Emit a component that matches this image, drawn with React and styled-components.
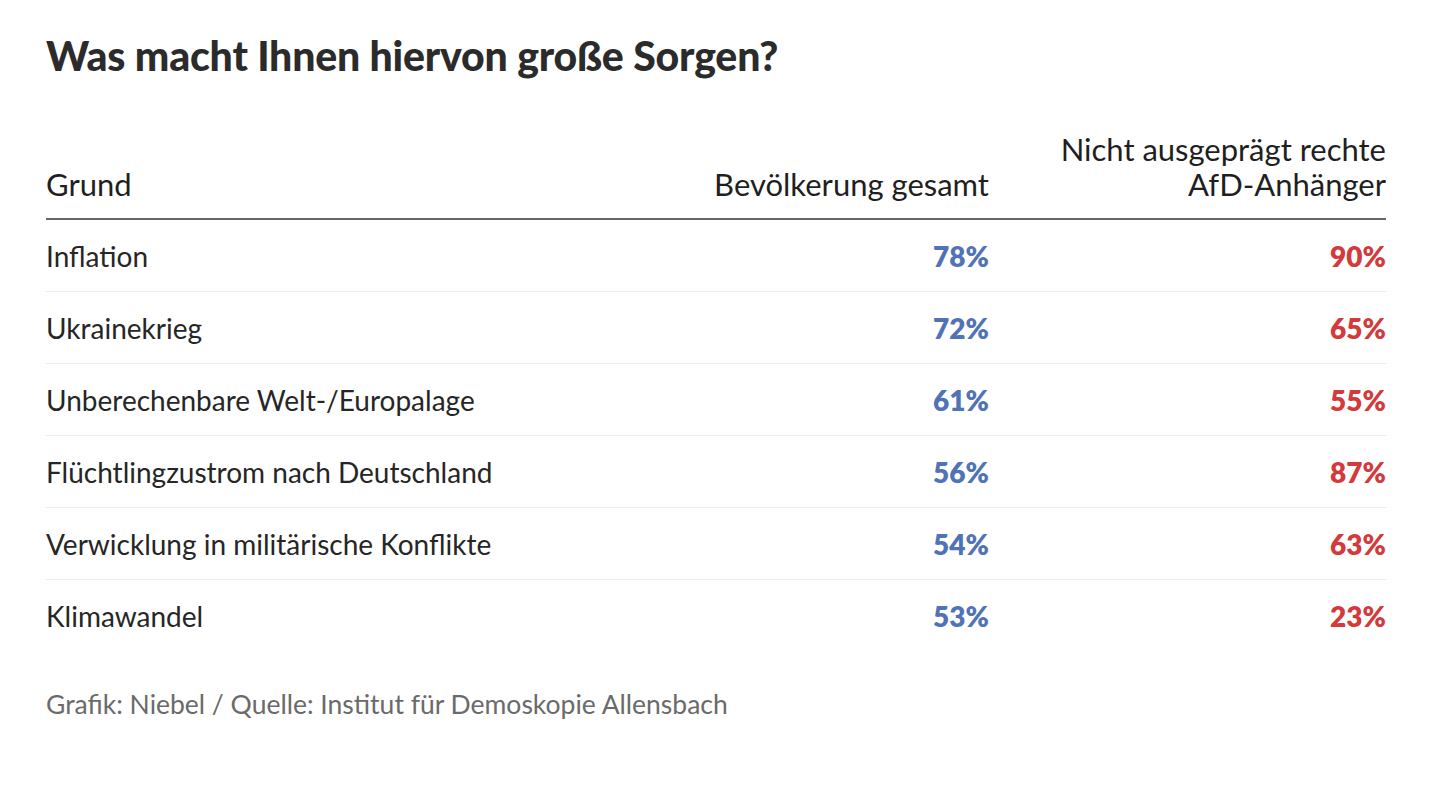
import React from 'react'
import styled, { createGlobalStyle } from 'styled-components'

const GlobalStyle = createGlobalStyle`
  html, body {
    margin: 0;
    padding: 0;
    background: #fff;
  }
  body {
    font-family: Lato, "Noto Sans", sans-serif;
    color: #222;
  }
`

const Page = styled.div`
  padding: 28px 64px 0 46px;
`

const Title = styled.h1`
  font-size: 41px;
  font-weight: 900;
  color: #2b2b2b;
  margin: 0 0 48px;
  line-height: 56px;
  letter-spacing: -0.2px;
`

const Table = styled.div`
  display: grid;
  grid-template-columns: 1fr 320px 397px;
`

const HeadCell = styled.div`
  font-size: 31px;
  line-height: 35px;
  color: #1f1f1f;
  text-align: ${p => (p.$right ? 'right' : 'left')};
  align-self: end;
  padding-bottom: 16px;
  border-bottom: 2px solid #666;
`

const Cell = styled.div`
  font-size: 28px;
  height: 71px;
  display: flex;
  align-items: center;
  justify-content: ${p => (p.$right ? 'flex-end' : 'flex-start')};
  color: ${p => p.$color || '#262626'};
  font-weight: ${p => (p.$bold ? 800 : 400)};
  border-bottom: ${p => (p.$last ? 'none' : '1px solid #ececec')};
`

const Source = styled.p`
  margin: 37px 0 0;
  font-size: 26.5px;
  color: #6a6a6a;
`

const BLUE = '#5073b6'
const RED = '#d4393c'

const rows = [
  ['Inflation', '78%', '90%'],
  ['Ukrainekrieg', '72%', '65%'],
  ['Unberechenbare Welt-/Europalage', '61%', '55%'],
  ['Flüchtlingzustrom nach Deutschland', '56%', '87%'],
  ['Verwicklung in militärische Konflikte', '54%', '63%'],
  ['Klimawandel', '53%', '23%'],
]

export default function App() {
  return (
    <>
      <GlobalStyle />
      <Page>
        <Title>Was macht Ihnen hiervon große Sorgen?</Title>
        <Table>
          <HeadCell>Grund</HeadCell>
          <HeadCell $right>Bevölkerung gesamt</HeadCell>
          <HeadCell $right>
            Nicht ausgeprägt rechte
            <br />
            AfD-Anhänger
          </HeadCell>
          {rows.map(([label, all, afd], i) => {
            const last = i === rows.length - 1
            return (
              <React.Fragment key={label}>
                <Cell $last={last}>{label}</Cell>
                <Cell $last={last} $right $bold $color={BLUE}>{all}</Cell>
                <Cell $last={last} $right $bold $color={RED}>{afd}</Cell>
              </React.Fragment>
            )
          })}
        </Table>
        <Source>Grafik: Niebel / Quelle: Institut für Demoskopie Allensbach</Source>
      </Page>
    </>
  )
}
